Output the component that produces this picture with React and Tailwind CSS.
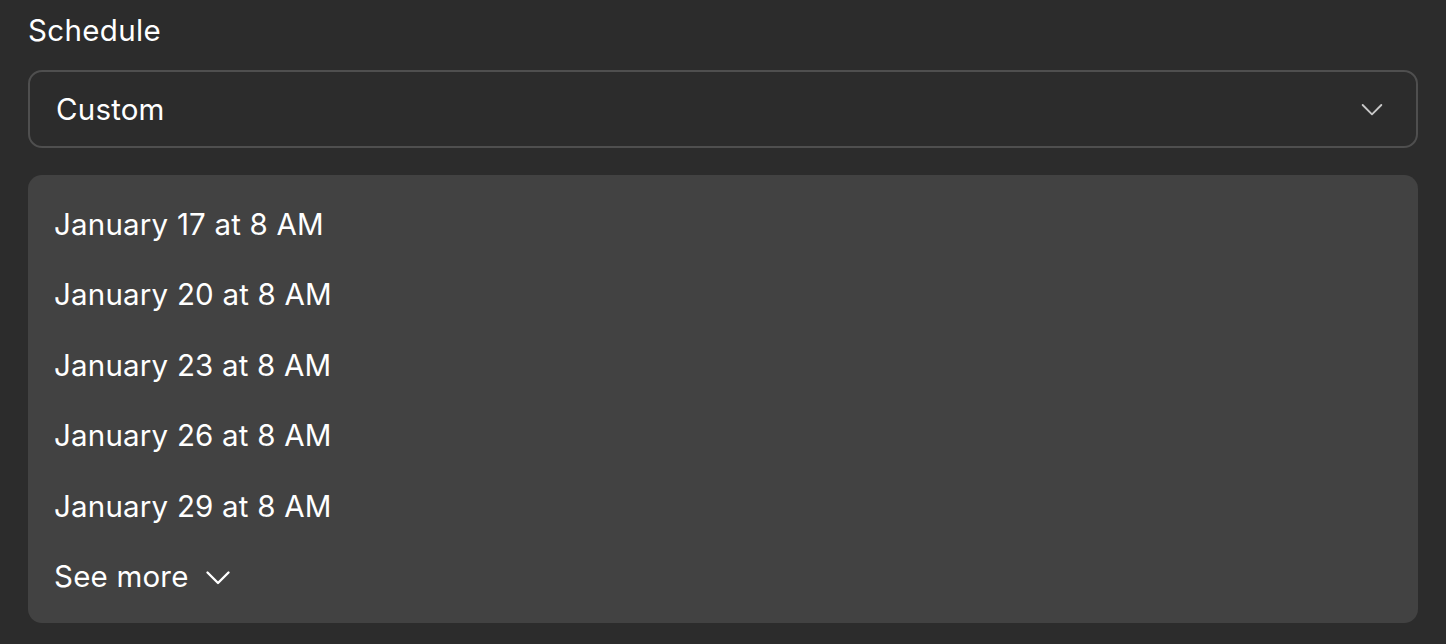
import React from "react";

const Chevron = ({ className, sw = 2 }) => (
  <svg viewBox="0 0 24 24" fill="none" stroke="currentColor" strokeWidth={sw} strokeLinecap="round" strokeLinejoin="round" className={className}>
    <path d="M5 9l7 7 7-7" />
  </svg>
);

export default function App() {
  const dates = ["January 17 at 8 AM", "January 20 at 8 AM", "January 23 at 8 AM", "January 26 at 8 AM", "January 29 at 8 AM"];
  return (
    <div className="w-[1446px] h-[644px] bg-[#2c2c2c] text-white px-[28px] pt-[12px]" style={{ fontFamily: "Inter, 'Noto Sans', sans-serif" }}>
      <div className="text-[29.5px] tracking-[0.35px] leading-[36px] h-[36px] mb-[22px]">Schedule</div>
      <div className="h-[78px] rounded-[14px] border-2 border-[#4f4f4f] flex items-center justify-between pl-[26px] pr-[28px]">
        <span className="text-[29.5px] tracking-[0.2px]">Custom</span>
        <Chevron className="w-[32px] h-[32px] text-[#c8c8c8]" sw={1.4} />
      </div>
      <div className="mt-[27px] h-[448px] rounded-[14px] bg-[#424242] pl-[26px] pt-[14px] flex flex-col">
        {dates.map((d) => (
          <div key={d} className="h-[70.4px] flex items-center text-[29.5px] tracking-[0.2px]">{d}</div>
        ))}
        <div className="h-[70.4px] flex items-center text-[29.5px] tracking-[0.2px] gap-[11px]">
          <span>See more</span>
          <Chevron className="w-[36px] h-[36px] mt-[2px]" sw={1.6} />
        </div>
      </div>
    </div>
  );
}
